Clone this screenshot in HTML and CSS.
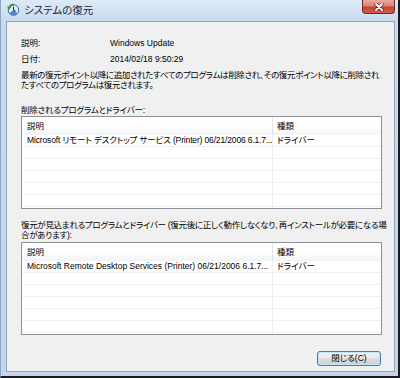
FILE: index.html
```html
<!DOCTYPE html>
<html lang="ja">
  <head>
    <meta charset="UTF-8" />
    <meta name="viewport" content="width=device-width, initial-scale=1.0" />
    <title>システムの復元</title>
    <link rel="stylesheet" href="styles.css">
  </head>
  <body>
    <div class="window">
      <div class="titlebar">
        <svg class="app-icon" width="13" height="13" viewBox="0 0 13 13">
          <circle cx="6.5" cy="7" r="5.3" fill="#dfeaf7" stroke="#3d6fae" stroke-width="1" />
          <path d="M2.2 10.2 A5.3 5.3 0 0 0 10.6 10.5 L6.5 7 Z" fill="#4f86c6" />
          <path d="M6.5 3.8 V7 L8.6 8.2" stroke="#1d2f48" stroke-width="1" fill="none" />
          <path d="M2 5.2 A4.8 4.8 0 0 1 7.2 1.8" stroke="#2d9b32" stroke-width="1.8" fill="none" />
          <path d="M0.2 3.6 L3.8 4.2 L1.6 7.2 Z" fill="#2d9b32" />
        </svg>
        <span class="title">システムの復元</span>
        <div class="close-btn">
          <svg width="10" height="8" viewBox="0 0 10 8">
            <path d="M2 1 L8 7 M8 1 L2 7" stroke="#4a2520" stroke-width="3.2" stroke-linecap="round" />
            <path d="M2 1 L8 7 M8 1 L2 7" stroke="#ffffff" stroke-width="1.8" stroke-linecap="round" />
          </svg>
        </div>
      </div>

      <div class="client">
        <div class="info-row"><span class="label">説明:</span><span>Windows Update</span></div>
        <div class="info-row"><span class="label">日付:</span><span>2014/02/18 9:50:29</span></div>
        <p class="note">最新の復元ポイント以降に追加されたすべてのプログラムは削除され、その復元ポイント以降に削除され<br>たすべてのプログラムは復元されます。</p>

        <div class="section-label">削除されるプログラムとドライバー:</div>
        <div class="list">
          <div class="list-row list-head"><div class="cell-desc">説明</div><div class="cell-type">種類</div></div>
          <div class="list-row"><div class="cell-desc jp">Microsoft リモート デスクトップ サービス (Printer) 06/21/2006 6.1.7...</div><div class="cell-type">ドライバー</div></div>
          <div class="list-row"><div class="cell-desc"></div><div class="cell-type"></div></div>
          <div class="list-row"><div class="cell-desc"></div><div class="cell-type"></div></div>
          <div class="list-row"><div class="cell-desc"></div><div class="cell-type"></div></div>
          <div class="list-row"><div class="cell-desc"></div><div class="cell-type"></div></div>
          <div class="list-row"><div class="cell-desc"></div><div class="cell-type"></div></div>
          <div class="list-row"><div class="cell-desc"></div><div class="cell-type"></div></div>
        </div>

        <div class="section-label second">復元が見込まれるプログラムとドライバー (復元後に正しく動作しなくなり、再インストールが必要になる場<br>合があります):</div>
        <div class="list second">
          <div class="list-row list-head"><div class="cell-desc">説明</div><div class="cell-type">種類</div></div>
          <div class="list-row"><div class="cell-desc">Microsoft Remote Desktop Services (Printer) 06/21/2006 6.1.7...</div><div class="cell-type">ドライバー</div></div>
          <div class="list-row"><div class="cell-desc"></div><div class="cell-type"></div></div>
          <div class="list-row"><div class="cell-desc"></div><div class="cell-type"></div></div>
          <div class="list-row"><div class="cell-desc"></div><div class="cell-type"></div></div>
          <div class="list-row"><div class="cell-desc"></div><div class="cell-type"></div></div>
          <div class="list-row"><div class="cell-desc"></div><div class="cell-type"></div></div>
          <div class="list-row"><div class="cell-desc"></div><div class="cell-type"></div></div>
        </div>

        <div class="actions">
          <button class="btn">閉じる(C)</button>
        </div>
      </div>
    </div>
  </body>
</html>
```

FILE: styles.css
```css
body {
  margin: 0;
  font-family: "Liberation Sans", "Noto Sans CJK JP", sans-serif;
  font-size: 8.5px;
  font-feature-settings: "palt";
  color: #000;
}

.window {
  width: 400px;
  height: 378px;
  box-sizing: border-box;
  display: flex;
  flex-direction: column;
  padding: 0 3px 4px 5px;
  border-left: 1px solid #8ea8c4;
  border-right: 2px solid #1c1c1c;
  border-bottom: 2px solid #1c1c1c;
  background: linear-gradient(180deg, #dde9f6 0%, #c9dbef 21px, #c2d5eb 100%);
}

.titlebar {
  height: 21px;
  display: flex;
  align-items: flex-start;
  flex-shrink: 0;
}

.app-icon {
  margin: 3px 0 0 1px;
}

.title {
  margin: 4px 0 0 4px;
  font-size: 10.5px;
  line-height: 13px;
  color: #1b2533;
}

.close-btn {
  margin-left: auto;
  width: 33px;
  height: 14px;
  box-sizing: border-box;
  display: flex;
  align-items: center;
  justify-content: center;
  border: 1px solid #6e2b22;
  border-top: none;
  border-radius: 0 0 4px 4px;
  background: linear-gradient(180deg, #e9aa9c 0%, #d98473 45%, #c4422f 55%, #d0604c 100%);
}

.client {
  flex: 1;
  display: flex;
  flex-direction: column;
  padding: 13px 12px 0 14px;
  border: 1px solid #90a5bc;
  background: #f0f0f0;
}

.info-row {
  display: flex;
  height: 16px;
  line-height: 16px;
}

.info-row .label {
  width: 89px;
}

.note {
  margin: 3px 0 0;
  line-height: 10px;
  letter-spacing: -0.37px;
  white-space: nowrap;
}

.section-label {
  margin-top: 15px;
  line-height: 10px;
  letter-spacing: -0.2px;
  white-space: nowrap;
}

.section-label.second {
  margin-top: 11px;
  letter-spacing: -0.3px;
}

.list {
  margin-top: 1px;
  height: 93px;
  box-sizing: border-box;
  border: 1px solid #8e9298;
  background: #fff;
  overflow: hidden;
}

.list.second {
  margin-top: 2px;
}

.list-row {
  display: flex;
  height: 12px;
  line-height: 11px;
  box-sizing: border-box;
  border-bottom: 1px solid #efefef;
}

.list-head {
  height: 18px;
  line-height: 18px;
  border-bottom: none;
  background: linear-gradient(180deg, #ffffff 45%, #f2f3f5 100%);
}

.cell-desc {
  width: 251px;
  flex-shrink: 0;
  box-sizing: border-box;
  padding-left: 5px;
  border-right: 1px solid #efefef;
  white-space: nowrap;
  overflow: hidden;
}

.cell-desc.jp {
  letter-spacing: -0.15px;
}

.list-head .cell-desc {
  border-right-color: #e2e3e5;
}

.cell-type {
  padding-left: 4px;
  white-space: nowrap;
}

.actions {
  margin-top: 16px;
  display: flex;
  justify-content: flex-end;
  padding-right: 1px;
}

.btn {
  width: 64px;
  height: 15px;
  padding: 0;
  font: inherit;
  line-height: 13px;
  color: #000;
  border: 1px solid #3c7fb1;
  border-radius: 3px;
  background: linear-gradient(180deg, #f2f2f2 0%, #ebebeb 50%, #dddddd 50%, #cfcfcf 100%);
  box-shadow: inset 0 0 0 1px #c4e6fb;
}
```
